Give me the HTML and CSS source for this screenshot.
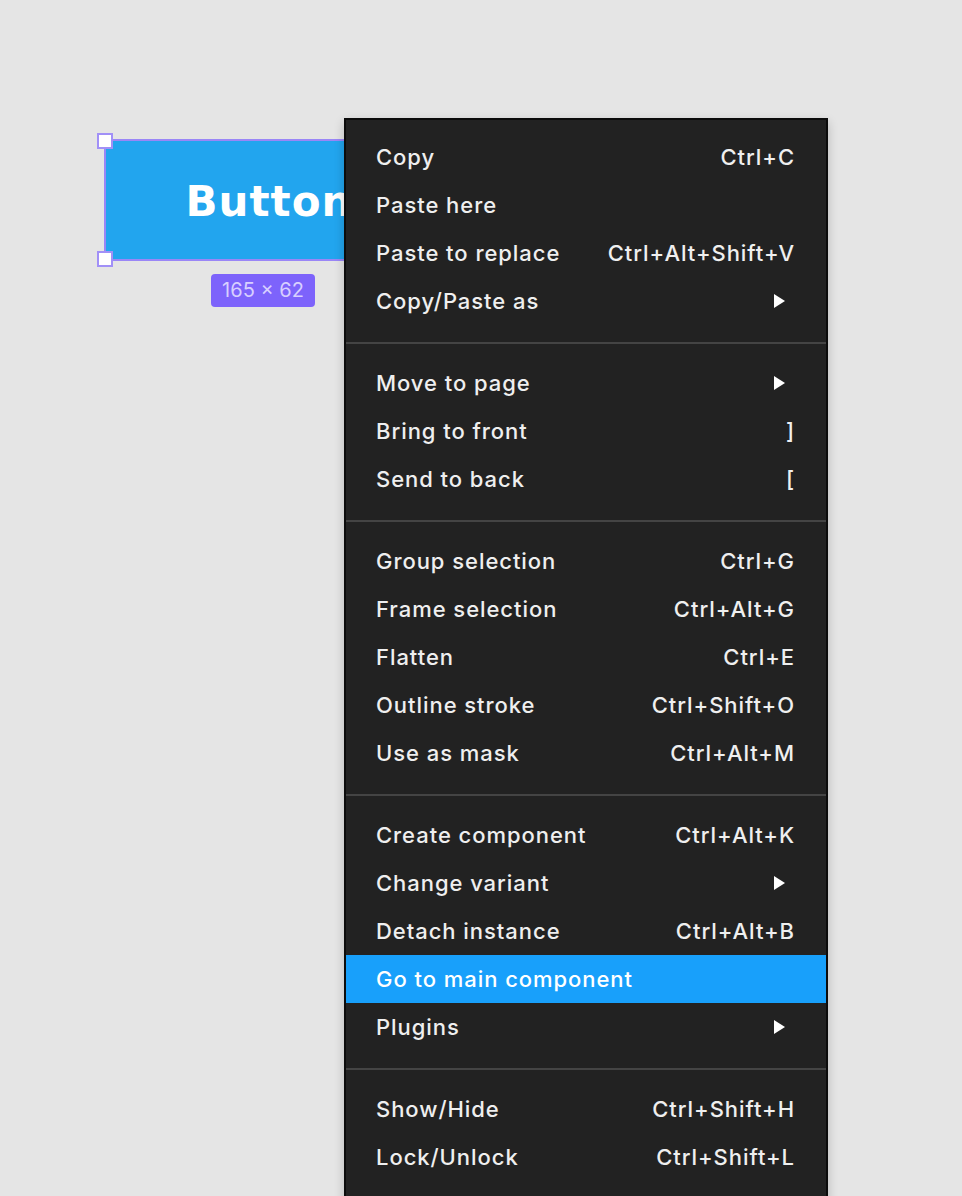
FILE: index.html
```html
<!DOCTYPE html>
<html lang="en">
  <head>
    <meta charset="UTF-8" />
    <meta name="viewport" content="width=device-width, initial-scale=1.0" />
    <title>Context menu</title>
    <link rel="stylesheet" href="styles.css">
  </head>

  <body>
    <div class="canvas">
      <!-- selected layer on the canvas -->
      <div class="layer">
        <div class="layer-box">Button</div>
        <div class="handle handle-tl"></div>
        <div class="handle handle-bl"></div>
        <div class="size-badge">165 × 62</div>
      </div>

      <div class="menu">
        <div class="section">
          <div class="item"><span>Copy</span><span class="key">Ctrl+C</span></div>
          <div class="item"><span>Paste here</span></div>
          <div class="item"><span>Paste to replace</span><span class="key">Ctrl+Alt+Shift+V</span></div>
          <div class="item"><span>Copy/Paste as</span><span class="arrow"></span></div>
        </div>
        <div class="section">
          <div class="item"><span>Move to page</span><span class="arrow"></span></div>
          <div class="item"><span>Bring to front</span><span class="key">]</span></div>
          <div class="item"><span>Send to back</span><span class="key">[</span></div>
        </div>
        <div class="section">
          <div class="item"><span>Group selection</span><span class="key">Ctrl+G</span></div>
          <div class="item"><span>Frame selection</span><span class="key">Ctrl+Alt+G</span></div>
          <div class="item"><span>Flatten</span><span class="key">Ctrl+E</span></div>
          <div class="item"><span>Outline stroke</span><span class="key">Ctrl+Shift+O</span></div>
          <div class="item"><span>Use as mask</span><span class="key">Ctrl+Alt+M</span></div>
        </div>
        <div class="section">
          <div class="item"><span>Create component</span><span class="key">Ctrl+Alt+K</span></div>
          <div class="item"><span>Change variant</span><span class="arrow"></span></div>
          <div class="item"><span>Detach instance</span><span class="key">Ctrl+Alt+B</span></div>
          <div class="item active"><span>Go to main component</span></div>
          <div class="item"><span>Plugins</span><span class="arrow"></span></div>
        </div>
        <div class="section">
          <div class="item"><span>Show/Hide</span><span class="key">Ctrl+Shift+H</span></div>
          <div class="item"><span>Lock/Unlock</span><span class="key">Ctrl+Shift+L</span></div>
        </div>
      </div>
    </div>
  </body>
</html>
```

FILE: styles.css
```css
body {
  margin: 0;
  background: #e5e5e5;
  font-family: Inter, "Noto Sans", sans-serif;
}

.canvas {
  position: relative;
  width: 962px;
  height: 1196px;
  overflow: hidden;
}

/* selected layer */
.layer {
  position: absolute;
  left: 104px;
  top: 139px;
}

.layer-box {
  width: 326px;
  height: 118px;
  background: #22a5ee;
  border: 2px solid #9a86f6;
  display: flex;
  align-items: center;
  justify-content: center;
  color: #fff;
  font-family: "DejaVu Sans", sans-serif;
  font-weight: bold;
  font-size: 42px;
  letter-spacing: 1px;
  padding-top: 2px;
  box-sizing: border-box;
  height: 122px;
  width: 330px;
}

.handle {
  position: absolute;
  left: -7px;
  width: 12px;
  height: 12px;
  background: #fff;
  border: 2px solid #a190f7;
}

.handle-tl {
  top: -6px;
}

.handle-bl {
  bottom: -6px;
}

.size-badge {
  position: absolute;
  left: 107px;
  top: 135px;
  width: 104px;
  height: 33px;
  box-sizing: border-box;
  background: #7d63fb;
  color: #d8cfff;
  border-radius: 4px;
  font-size: 20px;
  line-height: 33px;
  text-align: center;
}

/* context menu */
.menu {
  position: absolute;
  left: 344px;
  top: 118px;
  width: 480px;
  height: 1200px;
  background: #222;
  border: 2px solid #0c0c0c;
  box-shadow: 0 4px 10px rgba(0, 0, 0, 0.2);
  color: #efefef;
  font-size: 22px;
  font-weight: 500;
  letter-spacing: 0.95px;
}

.section {
  padding: 15px 0 17px;
  border-bottom: 2px solid #444;
}

.section:first-child {
  padding-top: 13px;
}

.section:last-child {
  border-bottom: none;
}

.item {
  height: 48px;
  padding: 0 31px 0 30px;
  display: flex;
  align-items: center;
  justify-content: space-between;
}

.item.active {
  background: #18a0fb;
  color: #fff;
}

.arrow {
  width: 0;
  height: 0;
  margin-right: 10px;
  border-top: 7px solid transparent;
  border-bottom: 7px solid transparent;
  border-left: 11px solid #fff;
}
```
